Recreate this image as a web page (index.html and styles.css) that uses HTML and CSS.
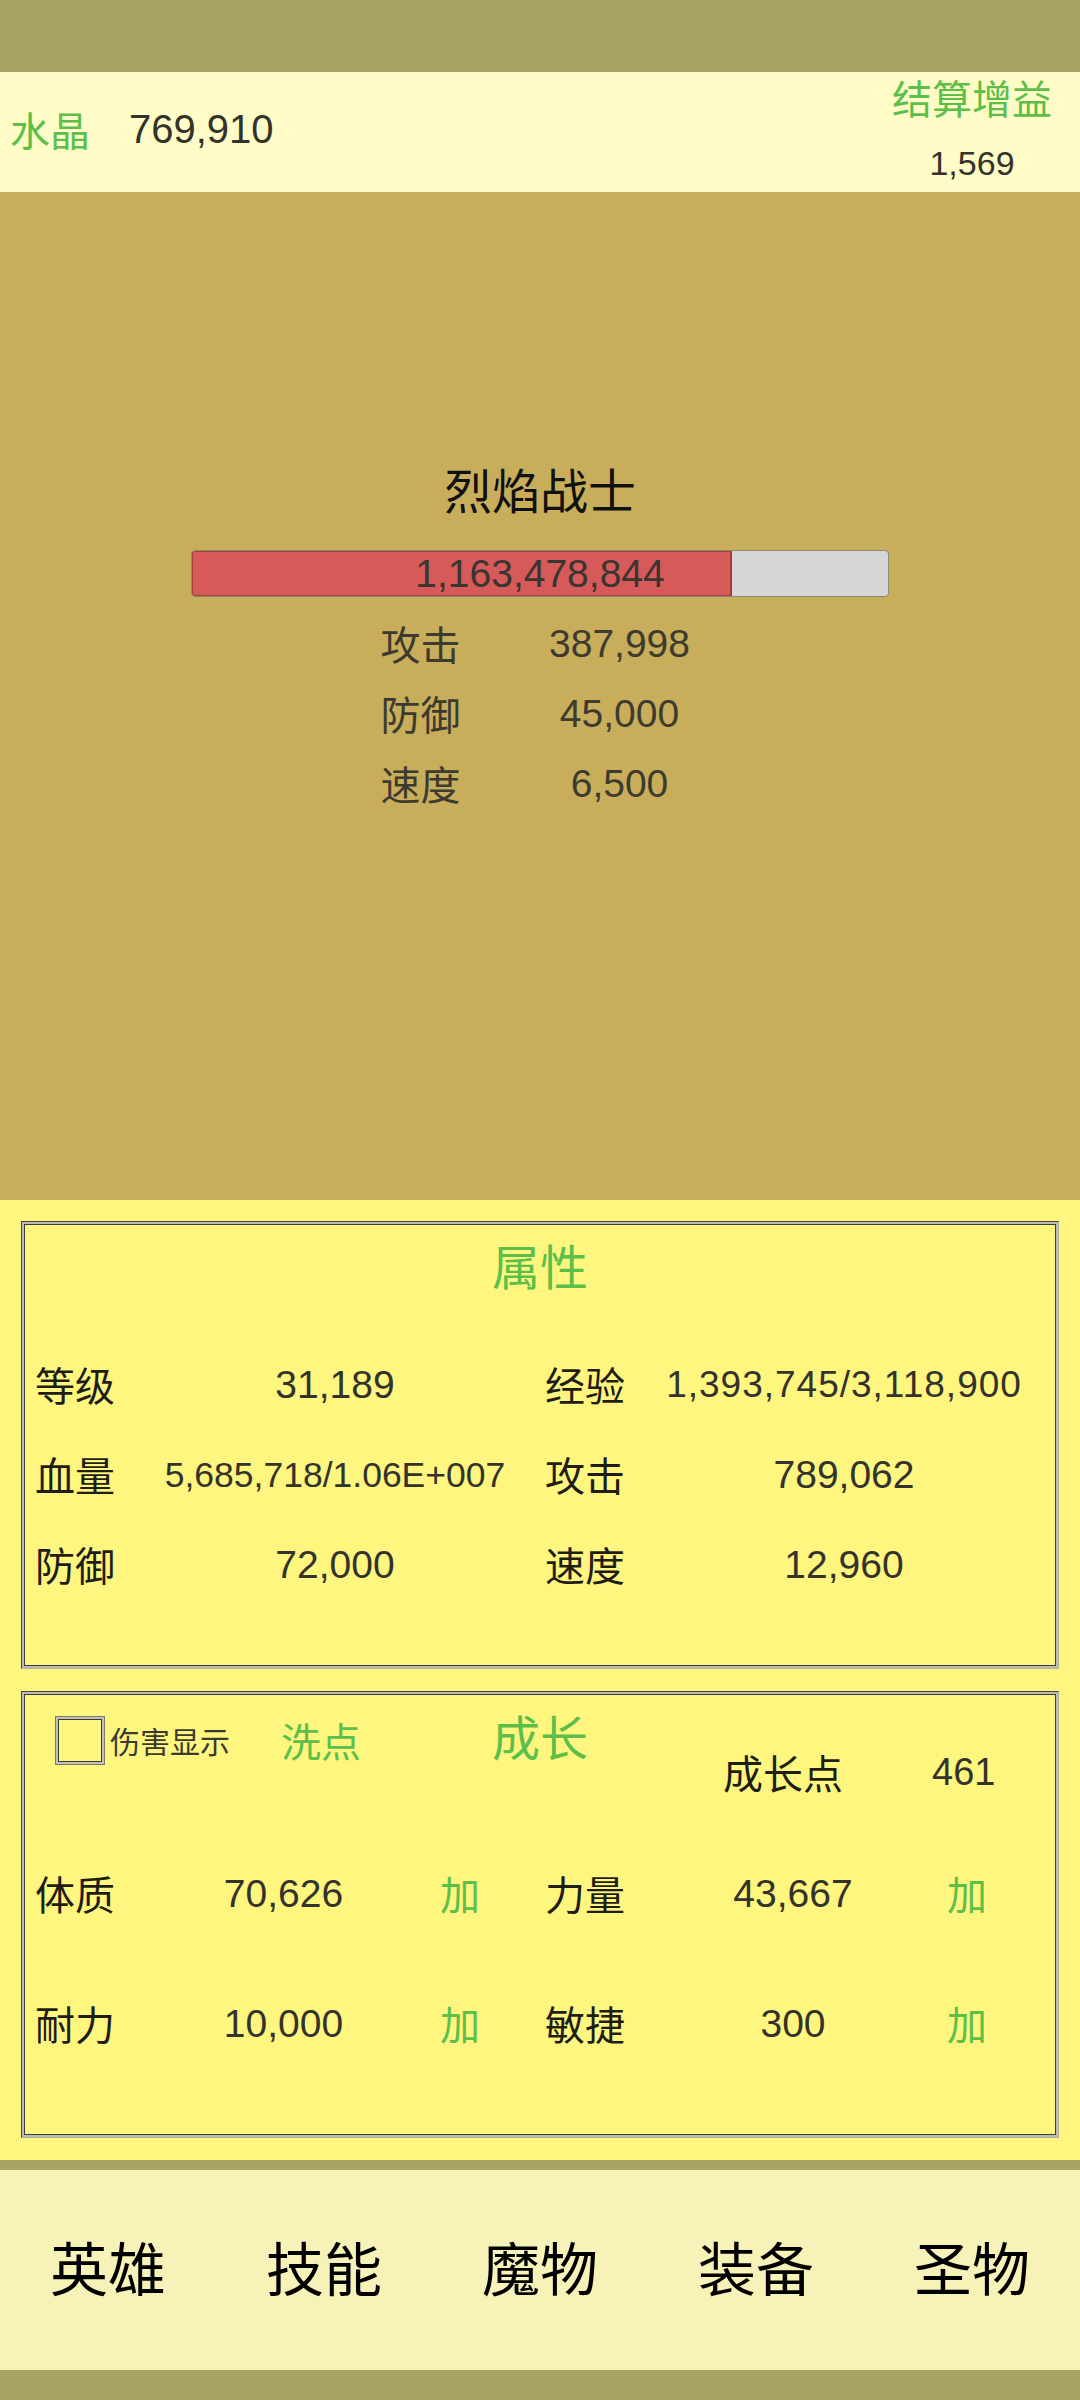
FILE: index.html
```html
<!DOCTYPE html>
<html lang="zh-CN">
<head>
  <meta charset="UTF-8">
  <meta name="viewport" content="width=device-width, initial-scale=1.0">
  <title>英雄</title>
  <link rel="stylesheet" href="styles.css">
</head>
<body>
  <div class="top-strip"></div>

  <header class="res-bar">
    <div class="crystal">
      <span class="crystal-label">水晶</span>
      <span class="crystal-value">769,910</span>
    </div>
    <div class="gain">
      <div class="gain-label">结算增益</div>
      <div class="gain-value">1,569</div>
    </div>
  </header>

  <section class="enemy">
    <div class="enemy-name">烈焰战士</div>
    <div class="hp-bar">
      <div class="hp-fill" style="width: 77.4%"></div>
      <div class="hp-text">1,163,478,844</div>
    </div>
    <div class="enemy-stats">
      <span class="stat-label">攻击</span><span class="stat-value">387,998</span>
      <span class="stat-label">防御</span><span class="stat-value">45,000</span>
      <span class="stat-label">速度</span><span class="stat-value">6,500</span>
    </div>
  </section>

  <section class="panel-area">
    <div class="panel attr-panel">
      <div class="panel-title">属性</div>
      <div class="attr-grid">
        <span class="row-label">等级</span><span class="row-value">31,189</span>
        <span class="row-label">经验</span><span class="row-value exp-value">1,393,745/3,118,900</span>
        <span class="row-label">血量</span><span class="row-value hp-value">5,685,718/1.06E+007</span>
        <span class="row-label">攻击</span><span class="row-value">789,062</span>
        <span class="row-label">防御</span><span class="row-value">72,000</span>
        <span class="row-label">速度</span><span class="row-value">12,960</span>
      </div>
    </div>

    <div class="panel grow-panel">
      <div class="grow-head">
        <div class="grow-left">
          <span class="checkbox"></span>
          <span class="check-label">伤害显示</span>
          <span class="reset-btn">洗点</span>
        </div>
        <div class="panel-title grow-title">成长</div>
        <div class="grow-points">
          <span class="points-label">成长点</span>
          <span class="points-value">461</span>
        </div>
      </div>
      <div class="grow-grid">
        <span class="row-label">体质</span><span class="row-value">70,626</span><span class="add-btn">加</span>
        <span class="row-label">力量</span><span class="row-value">43,667</span><span class="add-btn">加</span>
        <span class="row-label">耐力</span><span class="row-value">10,000</span><span class="add-btn">加</span>
        <span class="row-label">敏捷</span><span class="row-value">300</span><span class="add-btn">加</span>
      </div>
    </div>
  </section>

  <div class="nav-line"></div>
  <nav class="tabbar">
    <span class="tab">英雄</span>
    <span class="tab">技能</span>
    <span class="tab">魔物</span>
    <span class="tab">装备</span>
    <span class="tab">圣物</span>
  </nav>
  <div class="bottom-strip"></div>
</body>
</html>
```

FILE: styles.css
```css
html, body {
  margin: 0;
  padding: 0;
}
body {
  width: 1080px;
  height: 2400px;
  font-family: "Liberation Sans", "Noto Sans CJK SC", sans-serif;
  color: #33332b;
  background: #a9a463;
}

.top-strip {
  height: 72px;
  background: #a9a463;
}

/* resource header */
.res-bar {
  display: flex;
  height: 120px;
  background: #fffcc8;
}
.crystal {
  display: flex;
  align-items: center;
  padding: 0 0 6px 10px;
}
.crystal-label {
  font-size: 40px;
  color: #5cbf4a;
}
.crystal-value {
  margin-left: 39px;
  font-size: 40px;
}
.gain {
  margin-left: auto;
  width: 160px;
  padding: 6px 28px 0 0;
  text-align: center;
}
.gain-label {
  font-size: 40px;
  line-height: 44px;
  color: #5cbf4a;
}
.gain-value {
  margin-top: 21px;
  font-size: 34px;
  line-height: 40px;
}

/* enemy */
.enemy {
  height: 1008px;
  background: #c8ae5b;
  display: flex;
  flex-direction: column;
  align-items: center;
  padding-top: 271px;
  box-sizing: border-box;
}
.enemy-name {
  font-size: 48px;
  line-height: 60px;
  color: #111;
}
.hp-bar {
  display: grid;
  margin-top: 27px;
  width: 698px;
  height: 47px;
  box-sizing: border-box;
  background: #d6d6d6;
  border: 1px solid #8d8a78;
  border-radius: 4px;
  overflow: hidden;
}
.hp-fill, .hp-text {
  grid-area: 1 / 1;
}
.hp-fill {
  background: #d75a5a;
  border-right: 1px solid #9b3b2b;
  box-shadow: inset 0 0 0 1px #a8412f;
  border-radius: 3px 0 0 3px;
}
.hp-text {
  font-size: 39px;
  line-height: 45px;
  text-align: center;
  color: #3a3530;
}
.enemy-stats {
  display: grid;
  grid-template-columns: 159px 160px;
  grid-auto-rows: 70px;
  align-items: center;
  margin-top: 12px;
}
.stat-label {
  font-size: 40px;
  color: #3d3b30;
  margin-top: -3px;
}
.stat-value {
  font-size: 39px;
  text-align: center;
  color: #3d3b30;
}

/* panels */
.panel-area {
  display: flex;
  flex-direction: column;
  gap: 22px;
  padding: 21px 21px 22px;
  background: #fff680;
}
.panel {
  box-sizing: border-box;
  border: 1px solid;
  border-color: #444 #b3b2a8 #b3b2a8 #444;
  box-shadow: inset 0 0 0 2px #bdbcb2, inset 0 0 0 3px #3c3c3c;
}
.attr-panel {
  height: 448px;
  padding-top: 17px;
}
.grow-panel {
  height: 447px;
}
.panel-title {
  font-size: 48px;
  line-height: 60px;
  text-align: center;
  color: #5cbf4a;
}
.row-label {
  font-size: 40px;
  color: #1e1e16;
  margin-top: -3px;
}
.row-value {
  font-size: 39px;
  text-align: center;
}
.attr-grid {
  display: grid;
  grid-template-columns: 90px 420px 90px 418px;
  grid-auto-rows: 90px;
  align-items: center;
  margin-top: 41px;
  padding-left: 13px;
}
.exp-value {
  font-size: 37px;
  letter-spacing: 1px;
}
.hp-value {
  font-size: 35.5px;
}

.grow-head {
  display: grid;
  grid-template-columns: 1fr auto 1fr;
  align-items: start;
  height: 137px;
}
.grow-left {
  display: flex;
  align-items: center;
  height: 50px;
  margin-top: 23px;
  padding-left: 33px;
}
.checkbox {
  width: 50px;
  height: 49px;
  box-sizing: border-box;
  border: 1px solid #7a7a70;
  box-shadow: inset 0 0 0 2px #c2c1b6, inset 0 0 0 3px #3a3a3a;
}
.check-label {
  margin-left: 5px;
  font-size: 30px;
  color: #3a3a30;
}
.reset-btn {
  margin-left: 51px;
  font-size: 40px;
  color: #5cbf4a;
}
.grow-title {
  margin-top: 18px;
}
.grow-points {
  display: flex;
  align-items: center;
  height: 50px;
  margin: 55px 0 0 135px;
}
.points-label {
  font-size: 40px;
  color: #1e1e16;
}
.points-value {
  margin-left: 89px;
  font-size: 38px;
}
.grow-grid {
  display: grid;
  grid-template-columns: 115px 267px 128px 115px 266px 82px;
  grid-auto-rows: 130px;
  align-items: center;
  padding-left: 13px;
}
.add-btn {
  padding-left: 23px;
  font-size: 40px;
  color: #5cbf4a;
  margin-top: -3px;
}
.grow-grid .add-btn:nth-child(6n) {
  padding-left: 0;
  text-align: center;
}

/* bottom navigation */
.nav-line {
  height: 10px;
  background: #a9a463;
}
.tabbar {
  display: grid;
  grid-template-columns: repeat(5, 1fr);
  align-items: center;
  height: 200px;
  padding-bottom: 8px;
  box-sizing: border-box;
  background: #f7f2b8;
}
.tab {
  font-size: 58px;
  text-align: center;
  color: #000;
}
.bottom-strip {
  height: 30px;
  background: #a9a463;
}
```
